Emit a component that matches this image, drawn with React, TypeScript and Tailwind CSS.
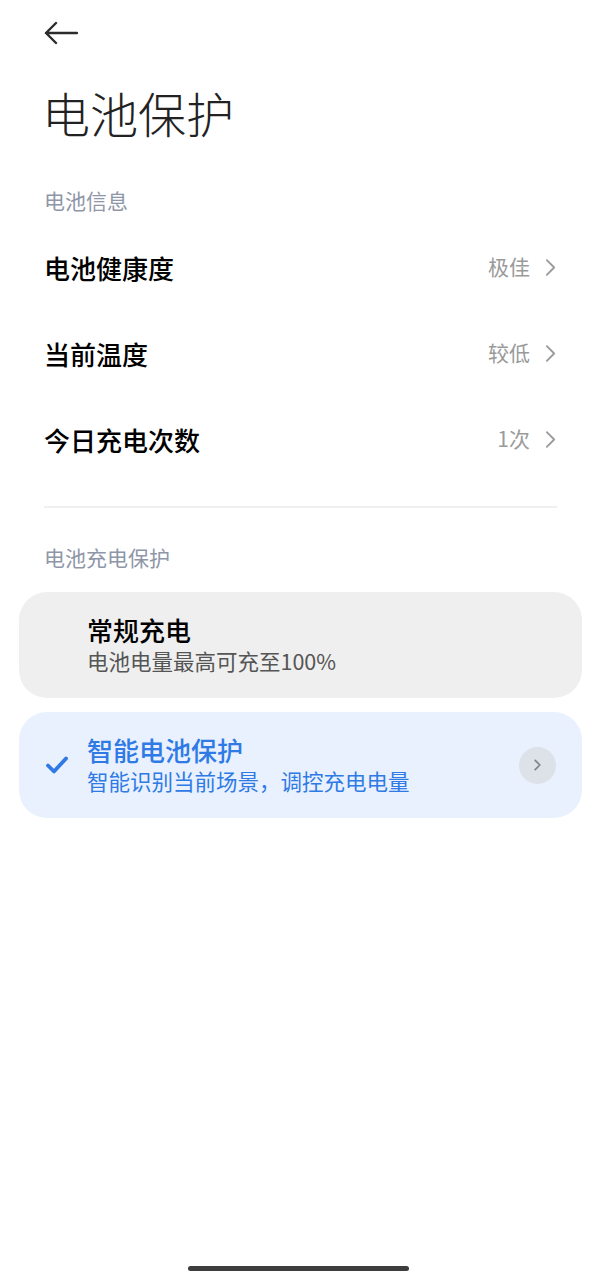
import React from 'react'

const font = { fontFamily: '"Noto Sans CJK SC", "Noto Sans", sans-serif' }

const Chevron = ({ className, width = 2 }: { className?: string; width?: number }) => (
  <svg viewBox="0 0 12 20" className={className} fill="none" stroke="currentColor" strokeWidth={width} strokeLinecap="round" strokeLinejoin="round">
    <path d="M2 2l8 8-8 8" />
  </svg>
)

const rows = [
  { label: '电池健康度', value: '极佳' },
  { label: '当前温度', value: '较低' },
  { label: '今日充电次数', value: '1次' },
]

const App = () => {
  return (
    <div className="w-[601px] h-[1280px] bg-white flex flex-col relative overflow-hidden" style={font}>
      <div className="h-[66px] flex items-center pl-[44px]">
        <svg width="34" height="24" viewBox="0 0 34 24" fill="none" stroke="#2b2b2b" strokeWidth="2.4" strokeLinecap="round" strokeLinejoin="round">
          <path d="M33 12H2M12 2L2 12l10 10" />
        </svg>
      </div>
      <h1 className="pl-[42px] mt-[18px] text-[48px] leading-[56px] font-light text-[#222]">电池保护</h1>
      <div className="pl-[44px] mt-[46px] text-[21px] leading-[28px] text-[#8e96a8]">电池信息</div>
      <div className="mt-[10px] flex flex-col">
        {rows.map((r) => (
          <div key={r.label} className="h-[86px] flex items-center justify-between pl-[44px] pr-[45px]">
            <span className="text-[26px] font-medium text-black">{r.label}</span>
            <span className="flex items-center gap-[15px] text-[21px] text-[#9a9a9a]">
              {r.value}
              <Chevron className="w-[11px] h-[19px] text-[#9a9a9a]" />
            </span>
          </div>
        ))}
      </div>
      <div className="mx-[44px] mt-[24px] h-[2px] bg-[#f0f0f0]" />
      <div className="pl-[44px] mt-[35px] text-[21px] leading-[28px] text-[#8e96a8]">电池充电保护</div>
      <div className="mx-[19px] mt-[21px] h-[106px] rounded-[28px] bg-[#efefef] flex flex-col justify-center pl-[68px]">
        <div className="text-[26px] leading-[32px] font-medium text-black">常规充电</div>
        <div className="text-[21.5px] leading-[30px] text-[#555]">电池电量最高可充至100%</div>
      </div>
      <div className="mx-[19px] mt-[14px] h-[106px] rounded-[28px] bg-[#e8f1fd] flex items-center">
        <div className="w-[68px] flex justify-center pl-[8px]">
          <svg width="24" height="20" viewBox="0 0 24 20" fill="none" stroke="#2f7ae5" strokeWidth="3.8" strokeLinecap="round" strokeLinejoin="round">
            <path d="M3 10.5l6 6L21 3.5" />
          </svg>
        </div>
        <div className="flex-1 flex flex-col">
          <div className="text-[26px] leading-[32px] font-medium text-[#2f7ae5]">智能电池保护</div>
          <div className="text-[21.5px] leading-[30px] text-[#2f7ae5]">智能识别当前场景，调控充电电量</div>
        </div>
        <div className="w-[37px] h-[37px] rounded-full bg-[#dde2e8] flex items-center justify-center mr-[26px]">
          <Chevron className="w-[7px] h-[12px] text-[#7f858c]" width={3} />
        </div>
      </div>
      <div className="absolute bottom-[9px] left-[188px] w-[221px] h-[5px] rounded-full bg-[#3d3d3d]" />
    </div>
  )
}

export default App
